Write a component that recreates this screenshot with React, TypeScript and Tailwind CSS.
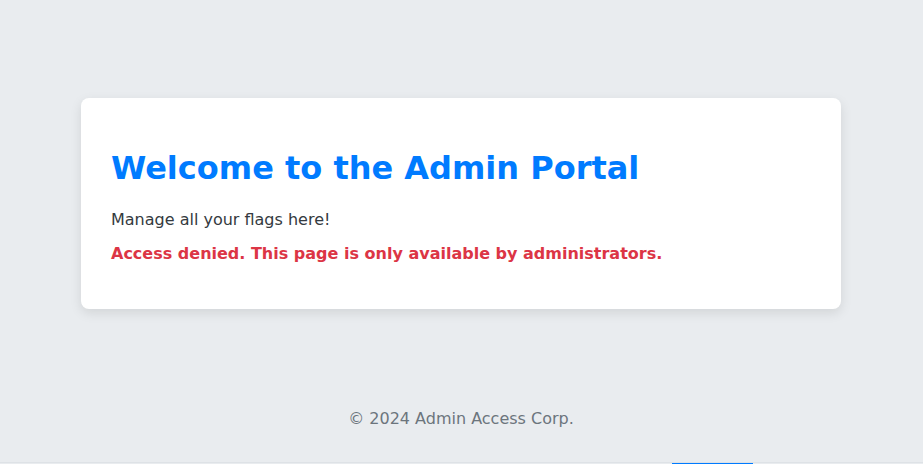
export default function App() {
  return (
    <div className="min-h-screen bg-[#e9ecef] font-['DejaVu_Sans',sans-serif] leading-normal">
      <div className="pt-[98px]">
        <div className="ml-[81px] w-[760px] rounded-lg bg-white px-[30px] pt-[51px] pb-[43px] shadow-[0_4px_12px_rgba(0,0,0,0.1)]">
          <h1 className="mb-[21px] text-[32px] font-bold leading-[38px] text-[#007bff]">
            Welcome to the Admin Portal
          </h1>
          <p className="text-base text-[#343a40]">Manage all your flags here!</p>
          <p className="mt-[10px] text-base font-bold text-[#dc3545]">
            Access denied. This page is only available by administrators.
          </p>
        </div>
      </div>
      <footer className="mt-[98px] pr-px text-center text-base text-[#6c757d]">
        © 2024 Admin Access Corp.
      </footer>
      <div className="mt-[31px] border-t border-[#dee2e6]">
        <div className="ml-[672px] h-[30px] w-[81px] bg-[#007bff]" />
      </div>
    </div>
  )
}
